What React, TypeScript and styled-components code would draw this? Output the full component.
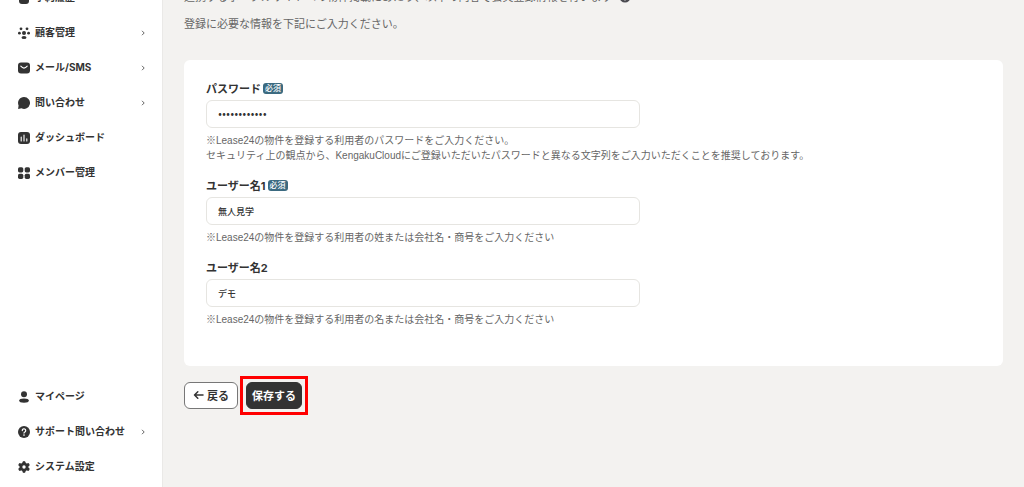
import React from "react";
import styled, { createGlobalStyle } from "styled-components";

const ink = "#333333";

const GlobalStyle = createGlobalStyle`
  *, *::before, *::after { box-sizing: border-box; }
  body {
    margin: 0;
    overflow: hidden;
    background: #f3f2f0;
    color: ${ink};
    font-family: "Liberation Sans", "Noto Sans CJK JP", sans-serif;
    font-size: 10px;
  }
  input, button { font-family: inherit; color: inherit; }
`;

const Shell = styled.div`
  display: flex;
  min-height: 100vh;
`;

const Sidebar = styled.aside`
  flex: none;
  display: flex;
  flex-direction: column;
  justify-content: space-between;
  width: 163px;
  height: 100vh;
  padding-bottom: 3px;
  background: #ffffff;
  border-right: 1px solid #eae9e7;
`;

const Nav = styled.nav<{ $scrolled?: boolean }>`
  display: flex;
  flex-direction: column;
  margin-top: ${(p) => (p.$scrolled ? "-20px" : "0")};
`;

const NavItem = styled.a`
  display: flex;
  align-items: center;
  gap: 5px;
  height: 35px;
  padding: 0 15px 0 18px;
  color: ${ink};
  font-family: Inter, "Noto Sans CJK JP", sans-serif;
  font-size: 10px;
  font-weight: 700;
  line-height: 15px;
  text-decoration: none;
  white-space: nowrap;
`;

const NavIcon = styled.svg`
  flex: none;
  width: 12px;
  height: 12px;
`;

const Chevron = styled.svg`
  width: 8px;
  height: 8px;
  margin-left: auto;
`;

const Main = styled.main`
  flex: 1;
  min-width: 0;
  padding: 0 21px;
`;

const Intro = styled.div`
  margin-top: -13px;
  height: 73px;
  color: #666666;
  font-size: 11px;
  line-height: 20px;
`;

const IntroLine = styled.p`
  display: flex;
  align-items: center;
  gap: 6px;
  margin: 0 0 7px;
`;

const Card = styled.section`
  display: flex;
  flex-direction: column;
  gap: 13px;
  padding: 19px 22px 39px;
  background: #ffffff;
  border-radius: 6px;
`;

const Field = styled.div`
  display: flex;
  flex-direction: column;
`;

const Label = styled.label`
  display: flex;
  align-items: center;
  gap: 2px;
  height: 18px;
  margin-bottom: 3px;
  font-family: Inter, "Noto Sans CJK JP", sans-serif;
  font-size: 11px;
  font-weight: 700;
`;

const Required = styled.span`
  height: 11px;
  padding: 0 2px;
  background: #3b6a80;
  border-radius: 3px;
  color: #ffffff;
  font-size: 8px;
  font-weight: 500;
  line-height: 11px;
`;

const TextInput = styled.input`
  width: 56%;
  height: 28px;
  padding: 0 11px;
  background: #ffffff;
  border: 1px solid #e6e5e1;
  border-radius: 6px;
  font-size: 9px;
  font-weight: 500;
  outline: none;

  &[type="password"] {
    font-family: Lato, sans-serif;
    font-size: 7px;
    font-weight: 400;
  }
`;

const Note = styled.p`
  margin: 5px 0 0;
  color: #666666;
  font-size: 10px;
  line-height: 15px;
`;

const Actions = styled.div`
  display: flex;
  gap: 2px;
  margin-top: 10px;
  align-items: center;
`;

const Button = styled.button<{ $primary?: boolean }>`
  display: flex;
  align-items: center;
  justify-content: center;
  gap: 3px;
  height: 27px;
  padding: 0 ${(p) => (p.$primary ? "5px" : "8px")} 2px;
  background: ${(p) => (p.$primary ? ink : "#ffffff")};
  border: 1px solid ${(p) => (p.$primary ? ink : "#777777")};
  border-radius: 6px;
  color: ${(p) => (p.$primary ? "#ffffff" : ink)};
  font-size: 11px;
  font-weight: 700;
`;

const Highlight = styled.div`
  padding: 3px;
  border: 3px solid #ff0000;
`;

const icons: Record<string, React.ReactNode> = {
  booking: <rect x="1" y="1" width="10" height="11" rx="3" fill={ink} />,
  customers: (
    <g fill={ink}>
      <circle cx="3" cy="1.8" r="1.4" />
      <circle cx="9" cy="1.8" r="1.4" />
      <circle cx="1.4" cy="6.2" r="1.4" />
      <circle cx="10.6" cy="6.2" r="1.4" />
      <circle cx="6" cy="6" r="2" />
      <ellipse cx="6" cy="10.4" rx="2.5" ry="1.5" />
    </g>
  ),
  mail: (
    <>
      <rect x="0" y="0.6" width="12" height="10.8" rx="3" fill={ink} />
      <path d="M2.8 4.2Q6 8 9.2 4.2" fill="none" stroke="#fff" strokeWidth="1.1" strokeLinecap="round" />
    </>
  ),
  chat: <path d="M6 .1a5.9 5.9 0 1 1-2.5 11.2L.1 11.9l.5-3.4A5.9 5.9 0 0 1 6 .1Z" fill={ink} />,
  dashboard: (
    <>
      <rect width="12" height="12" rx="3" fill={ink} />
      <path d="M3.2 5v4M6 3v6M8.8 6.8V9" fill="none" stroke="#fff" strokeWidth="1.1" strokeLinecap="round" />
    </>
  ),
  members: (
    <g fill={ink}>
      <rect x="0" y="0.2" width="5.3" height="5.2" rx="1.6" />
      <rect x="6.7" y="0.2" width="5.3" height="5.2" rx="1.6" />
      <rect x="0" y="6.7" width="5.3" height="5.2" rx="1.6" />
      <rect x="6.7" y="6.7" width="5.3" height="5.2" rx="1.6" />
    </g>
  ),
  user: (
    <g fill={ink}>
      <circle cx="6" cy="3.2" r="3" />
      <ellipse cx="6" cy="9.6" rx="4.8" ry="2.2" />
    </g>
  ),
  help: (
    <>
      <circle cx="6" cy="6" r="6" fill={ink} />
      <path d="M4.3 4.6a1.7 1.7 0 1 1 2.6 1.4c-.6.4-.9.6-.9 1.1" fill="none" stroke="#fff" strokeWidth="1.2" strokeLinecap="round" />
      <circle cx="6" cy="9.1" r=".8" fill="#fff" />
    </>
  ),
  settings: (
    <>
      <g stroke={ink} strokeWidth="3.2" strokeLinecap="round">
        <path d="M6 1.7v8.6M2.1 3.8l7.8 4.4M2.1 8.2l7.8-4.4" />
      </g>
      <circle cx="6" cy="6" r="4.4" fill={ink} />
      <circle cx="6" cy="6" r="1.7" fill="#fff" />
    </>
  ),
  info: (
    <>
      <circle cx="6" cy="6" r="5.5" fill="#4a4a50" />
      <path d="M6 5.4v3.4M6 3v.3" stroke="#fff" strokeWidth="1.5" strokeLinecap="round" />
    </>
  ),
};

type Item = { icon: string; label: string; more?: boolean };

const mainItems: Item[] = [
  { icon: "booking", label: "予約履歴" },
  { icon: "customers", label: "顧客管理", more: true },
  { icon: "mail", label: "メール/SMS", more: true },
  { icon: "chat", label: "問い合わせ", more: true },
  { icon: "dashboard", label: "ダッシュボード" },
  { icon: "members", label: "メンバー管理" },
];

const footItems: Item[] = [
  { icon: "user", label: "マイページ" },
  { icon: "help", label: "サポート問い合わせ", more: true },
  { icon: "settings", label: "システム設定" },
];

const renderItem = ({ icon, label, more }: Item) => (
  <NavItem href="#" key={label}>
    <NavIcon viewBox="0 0 12 12" aria-hidden="true">{icons[icon]}</NavIcon>
    {label}
    {more && (
      <Chevron viewBox="0 0 8 8" aria-hidden="true">
        <path d="M3 1.8 5.2 4 3 6.2" fill="none" stroke="#555" strokeWidth="0.9" />
      </Chevron>
    )}
  </NavItem>
);

export default function App() {
  return (
    <>
      <GlobalStyle />
      <Shell>
        <Sidebar>
          <Nav $scrolled>{mainItems.map(renderItem)}</Nav>
          <Nav>{footItems.map(renderItem)}</Nav>
        </Sidebar>
        <Main>
          <Intro>
            <IntroLine>
              連携するポータルサイトへの物件掲載にあたり、以下の内容で会員登録情報を行います
              <NavIcon viewBox="0 0 12 12" aria-hidden="true">{icons.info}</NavIcon>
            </IntroLine>
            <IntroLine>登録に必要な情報を下記にご入力ください。</IntroLine>
          </Intro>
          <Card>
            <Field>
              <Label htmlFor="password">
                パスワード<Required>必須</Required>
              </Label>
              <TextInput id="password" type="password" defaultValue="kengaku-demo" />
              <Note>
                ※Lease24の物件を登録する利用者のパスワードをご入力ください。
                <br />
                セキュリティ上の観点から、KengakuCloudにご登録いただいたパスワードと異なる文字列をご入力いただくことを推奨しております。
              </Note>
            </Field>
            <Field>
              <Label htmlFor="name1">
                ユーザー名1<Required>必須</Required>
              </Label>
              <TextInput id="name1" type="text" defaultValue="無人見学" />
              <Note>※Lease24の物件を登録する利用者の姓または会社名・商号をご入力ください</Note>
            </Field>
            <Field>
              <Label htmlFor="name2">ユーザー名2</Label>
              <TextInput id="name2" type="text" defaultValue="デモ" />
              <Note>※Lease24の物件を登録する利用者の名または会社名・商号をご入力ください</Note>
            </Field>
          </Card>
          <Actions>
            <Button type="button">
              <svg width="11" height="10" viewBox="0 0 11 10" aria-hidden="true">
                <path d="M10 5H1.5M4.8 1.8 1.5 5l3.3 3.2" fill="none" stroke={ink} strokeWidth="1.5" strokeLinecap="round" strokeLinejoin="round" />
              </svg>
              戻る
            </Button>
            <Highlight>
              <Button type="submit" $primary>保存する</Button>
            </Highlight>
          </Actions>
        </Main>
      </Shell>
    </>
  );
}
